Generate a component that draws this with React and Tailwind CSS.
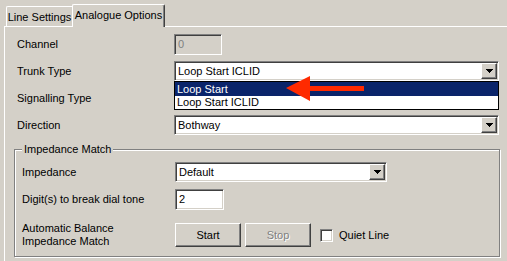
import React from "react";

const sunken =
  "border border-t-[#808080] border-l-[#808080] border-b-white border-r-white shadow-[inset_1px_1px_0_#404040,inset_-1px_-1px_0_#d4d0c8]";
const raised =
  "border border-t-white border-l-white border-b-[#404040] border-r-[#404040] shadow-[inset_-1px_-1px_0_#808080]";

function DownArrow() {
  return (
    <svg width="7" height="4" viewBox="0 0 7 4">
      <path d="M0 0h7v1h-1v1h-1v1h-1v1h-1v-1h-1v-1h-1v-1h-1z" fill="#000" />
    </svg>
  );
}

function Combo({ value, width = "w-[325px]" }) {
  return (
    <div className={`${sunken} ${width} h-[20px] bg-white flex items-center p-[1px]`}>
      <span className="flex-1 pl-[2px] leading-[13px]">{value}</span>
      <div className={`${raised} bg-[#d4d0c8] w-[16px] h-full flex items-center justify-center`}>
        <DownArrow />
      </div>
    </div>
  );
}

function Row({ label, labelW, mt, children }) {
  return (
    <div className={`flex items-center ${mt}`}>
      <div className={`${labelW} shrink-0`}>{label}</div>
      {children}
    </div>
  );
}

export default function App() {
  return (
    <div
      className="relative w-[507px] h-[261px] overflow-hidden bg-[#d4d0c8] text-[11px] leading-[13px] text-black"
      style={{ fontFamily: "Tahoma, 'Liberation Sans', Arial, sans-serif" }}
    >
      {/* tabs */}
      <div className="flex items-end h-[26px] pl-[6px]">
        <div className="w-[66px] h-[20px] border-l border-t border-white rounded-tl-[2px] flex items-center justify-center pt-[1px]">
          Line Settings
        </div>
        <div className="relative z-10 -mb-[1px] w-[93px] h-[23px] bg-[#d4d0c8] border-l border-t border-white border-r border-r-[#404040] rounded-t-[2px] shadow-[inset_-1px_0_0_#808080] flex items-center justify-center pb-[2px]">
          Analogue Options
        </div>
      </div>

      {/* panel */}
      <div className="ml-[4px] border-t border-l border-white h-[240px] pl-[12px]">
        <Row label="Channel" labelW="w-[157px]" mt="mt-[7px]">
          <div className={`${sunken} w-[48px] h-[21px] bg-[#d4d0c8] flex items-center pl-[3px] text-[#808080]`}>
            0
          </div>
        </Row>
        <Row label="Trunk Type" labelW="w-[157px]" mt="mt-[6px]">
          <Combo value="Loop Start ICLID" />
        </Row>
        <Row label="Signalling Type" labelW="w-[157px]" mt="mt-[7px]">
          <Combo value="" />
        </Row>
        <Row label="Direction" labelW="w-[157px]" mt="mt-[7px]">
          <Combo value="Bothway" />
        </Row>

        <fieldset className="mt-[8px] w-[486px] h-[114px] -ml-[3px] border border-[#808080] shadow-[inset_1px_1px_0_#fff,1px_1px_0_#fff] px-[7px] pb-[10px]">
          <legend className="px-[2px] bg-[#d4d0c8]">Impedance Match</legend>
          <Row label="Impedance" labelW="w-[153px]" mt="mt-[6px]">
            <Combo value="Default" width="w-[212px]" />
          </Row>
          <Row label="Digit(s) to break dial tone" labelW="w-[153px]" mt="mt-[7px]">
            <div className={`${sunken} w-[49px] h-[21px] bg-white flex items-center pl-[3px]`}>2</div>
          </Row>
          <Row
            label={
              <>
                Automatic Balance
                <br />
                Impedance Match
              </>
            }
            labelW="w-[153px]"
            mt="mt-[12px]"
          >
            <button className={`${raised} bg-[#d4d0c8] w-[66px] h-[24px] text-center`}>Start</button>
            <button
              className={`${raised} bg-[#d4d0c8] ml-[4px] w-[66px] h-[24px] text-center text-[#808080] [text-shadow:1px_1px_0_#fff]`}
            >
              Stop
            </button>
            <div className={`${sunken} ml-[9px] w-[13px] h-[13px] bg-white`} />
            <span className="ml-[6px]">Quiet Line</span>
          </Row>
        </fieldset>
      </div>

      {/* open dropdown list */}
      <div className="absolute left-[174px] top-[81px] w-[325px] h-[29px] bg-white border border-black z-20 flex flex-col">
        <div className="h-[14px] bg-[#0a246a] text-white pl-[2px] flex items-center">Loop Start</div>
        <div className="h-[13px] pl-[2px] flex items-center">Loop Start ICLID</div>
      </div>

      {/* red arrow annotation */}
      <svg className="absolute left-[284px] top-[75px] z-30" width="82" height="27" viewBox="0 0 82 27">
        <path d="M2 13 L26 1 L26 11 L80 11 L80 16 L26 16 L26 26 Z" fill="#ff2a00" />
      </svg>
    </div>
  );
}
